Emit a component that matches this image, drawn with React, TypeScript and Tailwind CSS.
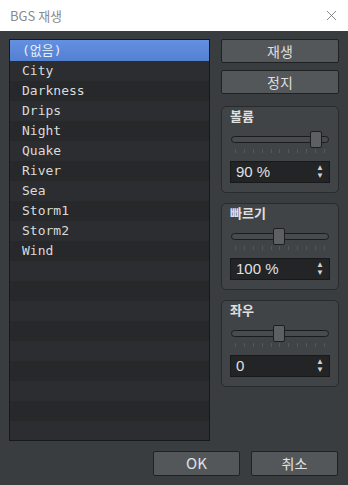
import { X } from "lucide-react";

const sounds = ["(없음)", "City", "Darkness", "Drips", "Night", "Quake", "River", "Sea", "Storm1", "Storm2", "Wind"];

const rows = Array.from({ length: 20 }, (_, i) => sounds[i] ?? "");

const Slider = ({ pos }: { pos: number }) => (
  <div className="relative h-[26px]">
    <div className="absolute left-0 right-0 top-[5px] h-[7px] rounded-full border border-[#1a1c1e] bg-[#484b4e]" />
    <div
      className="absolute top-0 h-[17px] w-[12px] rounded-[2px] border border-[#1c1e20] bg-[#5d6063]"
      style={{ left: pos }}
    />
    <div className="absolute left-[4px] right-[4px] top-[18px] flex justify-between">
      {Array.from({ length: 11 }, (_, i) => (
        <div key={i} className="h-[4px] w-px bg-[#55585b]" />
      ))}
    </div>
  </div>
);

const Group = ({ label, value, pos }: { label: string; value: string; pos: number }) => (
  <div className="rounded-[5px] border border-[#282a2c] bg-[#414447] px-[8px] pb-[9px]">
    <div className="mb-[6px] text-[13px] font-bold leading-[18px] text-[#e0e0e0]">{label}</div>
    <div className="px-px">
      <Slider pos={pos} />
    </div>
    <div
      className="mt-[4px] flex h-[22px] items-center border border-[#17191b] bg-[#222426] pl-[5px] pr-[5px] text-[15px] text-[#e0e0e0]"
      style={{ fontFamily: '"Liberation Sans", "Noto Sans CJK KR", sans-serif' }}
    >
      <span className="flex-1">{value}</span>
      <span className="flex flex-col text-[8px] leading-[8px] text-[#d0d0d0]">
        <span>▲</span>
        <span>▼</span>
      </span>
    </div>
  </div>
);

export default function App() {
  return (
    <div
      className="flex h-[485px] w-[348px] flex-col overflow-hidden bg-[#3a3d40]"
      style={{ fontFamily: '"Noto Sans CJK KR", "Noto Sans", sans-serif' }}
    >
      <div className="flex h-[31px] shrink-0 items-center justify-between bg-white pl-[10px] pr-[8px]">
        <span className="text-[13px] text-[#8a8a8a]">BGS 재생</span>
        <X className="h-[17px] w-[17px] text-[#666]" strokeWidth={1.1} />
      </div>

      <div className="flex flex-1 flex-col px-[9px] pt-[8px]">
        <div className="flex gap-[11px]">
          <div className="h-[402px] w-[201px] overflow-hidden border border-[#161819] bg-[#2a2c2f]">
            {rows.map((name, i) => (
              <div
                key={i}
                className={
                  i === 0
                    ? "h-[21px] bg-gradient-to-b from-[#6390e0] to-[#5380d0] pl-[12px] text-[13px] leading-[21px] text-[#e8eef8]"
                    : i % 2 === 1
                      ? "h-[20px] bg-[#2b2d30] pl-[12px] text-[13px] leading-[20px] text-[#dadada]"
                      : "h-[20px] bg-[#26282a] pl-[12px] text-[13px] leading-[20px] text-[#dadada]"
                }
                style={{ fontFamily: '"DejaVu Sans Mono", "Noto Sans CJK KR", monospace' }}
              >
                {name}
              </div>
            ))}
          </div>

          <div className="flex w-[118px] flex-col">
            <button className="h-[24px] rounded-[2px] border border-[#1f2123] bg-[#54575a] text-[14px] text-[#dedede]">재생</button>
            <button className="mt-[7px] h-[24px] rounded-[2px] border border-[#1f2123] bg-[#54575a] text-[14px] text-[#dedede]">정지</button>
            <div className="mt-[12px] flex flex-col gap-[10px]">
              <Group label="볼륨" value="90 %" pos={79} />
              <Group label="빠르기" value="100 %" pos={42} />
              <Group label="좌우" value="0" pos={42} />
            </div>
          </div>
        </div>

        <div className="mt-[10px] flex justify-end gap-[11px] pr-[1px]">
          <button className="h-[25px] w-[87px] rounded-[2px] border border-[#1f2123] bg-[#54575a] text-[15px] text-[#e2e2e2]">OK</button>
          <button className="h-[25px] w-[87px] rounded-[2px] border border-[#1f2123] bg-[#54575a] text-[14px] text-[#e2e2e2]">취소</button>
        </div>
      </div>
    </div>
  );
}
